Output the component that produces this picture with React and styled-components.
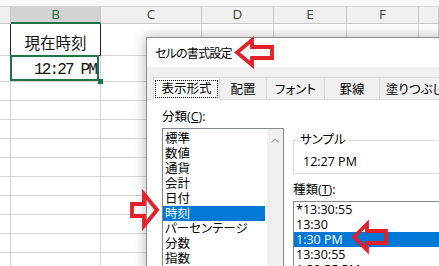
import React from "react";
import styled, { createGlobalStyle } from "styled-components";

const GlobalStyle = createGlobalStyle`
  html, body { margin: 0; padding: 0; background: #fff; overflow: hidden; }
  #root { width: 439px; height: 266px; }
`;

const Screen = styled.div`
  position: relative;
  width: 439px;
  height: 266px;
  overflow: hidden;
  background: #fff;
  font-family: "Open Sans", "Noto Sans CJK JP", sans-serif;
`;

// ---- spreadsheet ----
const TopStrip = styled.div`
  height: 6px;
  background: #f8f8f8;
  border-bottom: 1px solid #d8d8d8;
`;

const Sheet = styled.div`
  display: grid;
  grid-template-columns: 11px 90px 101px 72px 73px 72px 1fr;
  grid-template-rows: 17px 32px 26px repeat(10, 19px);
`;

const Cell = styled.div`
  position: relative;
  box-sizing: border-box;
  border-right: 1px solid #d4d4d4;
  border-bottom: 1px solid #d4d4d4;
`;

const HeadCell = styled(Cell)`
  background: ${(p) => (p.$active ? "#d3d3d3" : "#f0f0f0")};
  border-right-color: #c8c8c8;
  border-bottom: ${(p) => (p.$active ? "2px solid #217346" : "1px solid #c8c8c8")};
  color: ${(p) => (p.$active ? "#1d6b40" : "#444")};
  font-family: "Open Sans", sans-serif;
  font-size: 13.5px;
  line-height: 15px;
  text-align: center;
`;

const TitleCell = styled(Cell)`
  display: flex;
  align-items: center;
  justify-content: center;
  padding-top: 4px;
  font-family: "Noto Sans CJK JP", sans-serif;
  font-size: 15.5px;
  color: #111;
  &::after {
    content: "";
    position: absolute;
    top: 0;
    left: -1px;
    right: -1px;
    bottom: -1px;
    border: 1px solid #222;
    border-top: none;
    pointer-events: none;
  }
`;

const TimeCell = styled(Cell)`
  display: flex;
  align-items: center;
  justify-content: flex-end;
  padding: 3px 4px 0 0;
  font-family: "Liberation Mono", monospace;
  font-size: 16px;
  letter-spacing: -1.85px;
  color: #111;
  &::after {
    content: "";
    position: absolute;
    top: -1px;
    left: -1px;
    right: 1px;
    bottom: 0;
    border: 2px solid #217346;
    pointer-events: none;
  }
  &::before {
    content: "";
    position: absolute;
    left: 87px;
    top: 23px;
    width: 5px;
    height: 5px;
    background: #217346;
    z-index: 2;
  }
`;

// ---- dialog ----
const Dialog = styled.div`
  position: absolute;
  left: 146px;
  top: 37px;
  width: 330px;
  height: 260px;
  background: #fff;
  border: 1px solid #8c8c8c;
  box-shadow: 0 0 11px 2px rgba(0, 0, 0, 0.22);
  font-family: "Open Sans", "Noto Sans CJK JP", sans-serif;
  font-size: 12.5px;
  font-feature-settings: "palt";
  color: #000;
`;

const TitleBar = styled.div`
  height: 29px;
  display: flex;
  align-items: center;
  padding-left: 8px;
  font-size: 12px;
  letter-spacing: -0.8px;
`;

const TabStrip = styled.div`
  display: flex;
  background: #f0f0f0;
  padding: 10px 0 0 6px;
  border-bottom: 1px solid #d9d9d9;
`;

const Tab = styled.div`
  box-sizing: border-box;
  width: ${(p) => p.$w}px;
  height: 23px;
  margin-bottom: -1px;
  display: flex;
  align-items: center;
  justify-content: center;
  background: ${(p) => (p.$active ? "#fff" : "#f0f0f0")};
  border: 1px solid #d9d9d9;
  border-bottom: ${(p) => (p.$active ? "1px solid #fff" : "1px solid #d9d9d9")};
  border-left: ${(p) => (p.$first ? "1px solid #d9d9d9" : "none")};
  flex-shrink: 0;
`;

const Focus = styled.span`
  border: 1px dotted #000;
  padding: 0 5px;
  line-height: 16px;
`;

const Content = styled.div`
  display: flex;
  gap: 9px;
  padding: 9px 0 0 15px;
`;

const LeftCol = styled.div`
  width: 122px;
  flex-shrink: 0;
`;

const RightCol = styled.div`
  flex: 1;
  padding-top: 23px;
`;

const Label = styled.div`
  line-height: 16px;
  margin-top: ${(p) => p.$mt || 0}px;
`;

const U = styled.span`
  text-decoration: underline;
`;

const ListBox = styled.div`
  display: flex;
  margin-top: ${(p) => p.$mt}px;
  width: ${(p) => p.$w}px;
  height: ${(p) => p.$h}px;
  border: 1px solid #828790;
  box-sizing: border-box;
  background: #fff;
`;

const Items = styled.div`
  flex: 1;
  padding-top: ${(p) => p.$pt}px;
`;

const Item = styled.div`
  height: 15px;
  line-height: 15px;
  padding-left: 2px;
  margin-right: ${(p) => p.$mr || 0}px;
  white-space: nowrap;
  background: ${(p) => (p.$sel ? "#0078d7" : "transparent")};
  color: ${(p) => (p.$sel ? "#fff" : "#000")};
`;

const ScrollBar = styled.div`
  width: 16px;
  background: #f0f0f0;
  display: flex;
  justify-content: center;
  padding-top: 9px;
  box-sizing: border-box;
`;

const Sample = styled.fieldset`
  margin: 0;
  padding: 0 4px 3px;
  width: 160px;
  border: 1px solid #dcdcdc;
  legend {
    padding: 0 2px;
    line-height: 16px;
  }
`;

const SampleValue = styled.div`
  padding: 6px 0 0 5px;
  line-height: 16px;
`;

// ---- annotation arrows ----
const ArrowSvg = styled.svg`
  position: absolute;
  left: ${(p) => p.$x}px;
  top: ${(p) => p.$y}px;
  overflow: visible;
`;

function RedArrow({ x, y, w, h, sh, hl, dir }) {
  const s = 2;
  const a = (h - sh) / 2 + s;
  const b = (h + sh) / 2 - s;
  let pts = [
    [s, h / 2],
    [hl, s],
    [hl, a],
    [w - s, a],
    [w - s, b],
    [hl, b],
    [hl, h - s],
  ];
  if (dir === "right") pts = pts.map(([px, py]) => [w - px, py]);
  return (
    <ArrowSvg $x={x} $y={y} width={w} height={h}>
      <polygon
        points={pts.map((p) => p.join(",")).join(" ")}
        fill="none"
        stroke="#e3202a"
        strokeWidth="3.8"
        strokeLinejoin="miter"
      />
    </ArrowSvg>
  );
}

const cols = ["", "B", "C", "D", "E", "F", ""];
const categories = ["標準", "数値", "通貨", "会計", "日付", "時刻", "パーセンテージ", "分数", "指数", "文字列"];
const types = ["*13:30:55", "13:30", "1:30 PM", "13:30:55", "1:30:55 PM", "30:55.2"];
const tabs = [
  { label: "表示形式", w: 67 },
  { label: "配置", w: 47 },
  { label: "フォント", w: 58 },
  { label: "罫線", w: 55 },
  { label: "塗りつぶし", w: 70 },
];

export default function App() {
  return (
    <Screen>
      <GlobalStyle />
      <TopStrip />
      <Sheet>
        {cols.map((c, i) => (
          <HeadCell key={"h" + i} $active={c === "B"}>
            {c}
          </HeadCell>
        ))}
        {Array.from({ length: 12 }).map((_, r) =>
          cols.map((c, i) => {
            if (r === 0 && c === "B") return <TitleCell key={r + "-" + i}>現在時刻</TitleCell>;
            if (r === 1 && c === "B") return <TimeCell key={r + "-" + i}>12:27 PM</TimeCell>;
            return <Cell key={r + "-" + i} />;
          })
        )}
      </Sheet>

      <Dialog>
        <TitleBar>セルの書式設定</TitleBar>
        <TabStrip>
          {tabs.map((t, i) => (
            <Tab key={t.label} $w={t.w} $first={i === 0} $active={i === 0}>
              {i === 0 ? <Focus>{t.label}</Focus> : t.label}
            </Tab>
          ))}
        </TabStrip>
        <Content>
          <LeftCol>
            <Label>
              分類(<U>C</U>):
            </Label>
            <ListBox $mt={3} $w={122} $h={150}>
              <Items $pt={2}>
                {categories.map((c) => (
                  <Item key={c} $sel={c === "時刻"} $mr={2}>
                    {c}
                  </Item>
                ))}
              </Items>
              <ScrollBar>
                <svg width="8" height="5" viewBox="0 0 8 5">
                  <polyline points="0.5,4.5 4,1 7.5,4.5" fill="none" stroke="#a6a6a6" strokeWidth="1.2" />
                </svg>
              </ScrollBar>
            </ListBox>
          </LeftCol>
          <RightCol>
            <Sample>
              <legend>サンプル</legend>
              <SampleValue>12:27 PM</SampleValue>
            </Sample>
            <Label $mt={8}>
              種類(<U>T</U>):
            </Label>
            <ListBox $mt={3} $w={170} $h={90}>
              <Items $pt={0}>
                {types.map((t) => (
                  <Item key={t} $sel={t === "1:30 PM"}>
                    {t}
                  </Item>
                ))}
              </Items>
            </ListBox>
          </RightCol>
        </Content>
      </Dialog>

      <RedArrow x={235} y={38} w={39} h={29} sh={15} hl={17} dir="left" />
      <RedArrow x={130} y={192} w={29} h={36} sh={16} hl={15} dir="right" />
      <RedArrow x={352} y={222} w={36} h={30} sh={16} hl={15} dir="left" />
    </Screen>
  );
}
